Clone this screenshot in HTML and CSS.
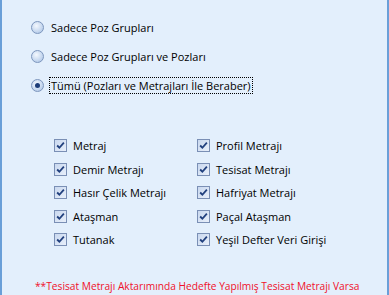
FILE: index.html
```html
<!DOCTYPE html>
<html lang="tr">
<head>
  <meta charset="UTF-8">
  <title>Aktarım Seçenekleri</title>
  <link rel="stylesheet" href="styles.css">
</head>
<body>
  <div class="panel">
    <div class="radios">
      <label class="radio"><span class="dot"></span><span class="text">Sadece Poz Grupları</span></label>
      <label class="radio"><span class="dot"></span><span class="text">Sadece Poz Grupları ve Pozları</span></label>
      <label class="radio checked"><span class="dot"></span><span class="text focus">Tümü (Pozları ve Metrajları İle Beraber)</span></label>
    </div>

    <div class="checks">
      <label class="check"><span class="box"><svg viewBox="0 0 8 8"><path d="M1 4 L3 6 L7 1.5"/></svg></span>Metraj</label>
      <label class="check"><span class="box"><svg viewBox="0 0 8 8"><path d="M1 4 L3 6 L7 1.5"/></svg></span>Profil Metrajı</label>
      <label class="check"><span class="box"><svg viewBox="0 0 8 8"><path d="M1 4 L3 6 L7 1.5"/></svg></span>Demir Metrajı</label>
      <label class="check"><span class="box"><svg viewBox="0 0 8 8"><path d="M1 4 L3 6 L7 1.5"/></svg></span>Tesisat Metrajı</label>
      <label class="check"><span class="box"><svg viewBox="0 0 8 8"><path d="M1 4 L3 6 L7 1.5"/></svg></span>Hasır Çelik Metrajı</label>
      <label class="check"><span class="box"><svg viewBox="0 0 8 8"><path d="M1 4 L3 6 L7 1.5"/></svg></span>Hafriyat Metrajı</label>
      <label class="check"><span class="box"><svg viewBox="0 0 8 8"><path d="M1 4 L3 6 L7 1.5"/></svg></span>Ataşman</label>
      <label class="check"><span class="box"><svg viewBox="0 0 8 8"><path d="M1 4 L3 6 L7 1.5"/></svg></span>Paçal Ataşman</label>
      <label class="check"><span class="box"><svg viewBox="0 0 8 8"><path d="M1 4 L3 6 L7 1.5"/></svg></span>Tutanak</label>
      <label class="check"><span class="box"><svg viewBox="0 0 8 8"><path d="M1 4 L3 6 L7 1.5"/></svg></span>Yeşil Defter Veri Girişi</label>
    </div>

    <p class="note">**Tesisat Metrajı Aktarımında Hedefte Yapılmış Tesisat Metrajı Varsa</p>
  </div>
</body>
</html>
```

FILE: styles.css
```css
html, body {
  margin: 0;
  padding: 0;
}
body {
  font-family: "Open Sans", "Noto Sans", sans-serif;
  font-size: 11px;
  color: #000;
  background: #e3effc;
}
.panel {
  box-sizing: border-box;
  width: 389px;
  height: 295px;
  background: #e3effc;
  border-left: 2px solid #6a9fd8;
  border-right: 2px solid #6a9fd8;
  overflow: hidden;
}
.radios {
  display: flex;
  flex-direction: column;
  gap: 12px;
  padding: 19px 0 0 29px;
}
.radio {
  display: flex;
  align-items: center;
  gap: 5px;
  height: 17px;
}
.dot {
  width: 11px;
  height: 11px;
  border-radius: 50%;
  border: 1px solid #7d96bd;
  background: radial-gradient(circle at 40% 35%, #f4f8fe 0%, #c5d7ef 60%, #a3bde2 100%);
  display: flex;
  align-items: center;
  justify-content: center;
}
.radio.checked .dot::after {
  content: "";
  width: 5px;
  height: 5px;
  border-radius: 50%;
  background: #1c3c78;
}
.text {
  padding: 0 1px;
  line-height: 15px;
  border: 1px solid transparent;
}
.text.focus {
  border: 1px dotted #000;
}
.checks {
  display: grid;
  grid-template-columns: 143px 150px;
  row-gap: 6.5px;
  padding: 43px 0 0 52px;
}
.check {
  display: flex;
  align-items: center;
  gap: 6px;
  height: 17px;
}
.box {
  box-sizing: border-box;
  width: 13px;
  height: 13px;
  border: 1px solid #7a8fb5;
  background: linear-gradient(135deg, #c9d8ef 0%, #e8effa 100%);
  display: flex;
  align-items: center;
  justify-content: center;
}
.box svg {
  width: 9px;
  height: 9px;
}
.box path {
  fill: none;
  stroke: #21407e;
  stroke-width: 1.6;
}
.note {
  margin: 30px 0 0 33px;
  color: #f0102a;
  font-size: 10.2px;
  line-height: 17px;
  white-space: nowrap;
}
```
